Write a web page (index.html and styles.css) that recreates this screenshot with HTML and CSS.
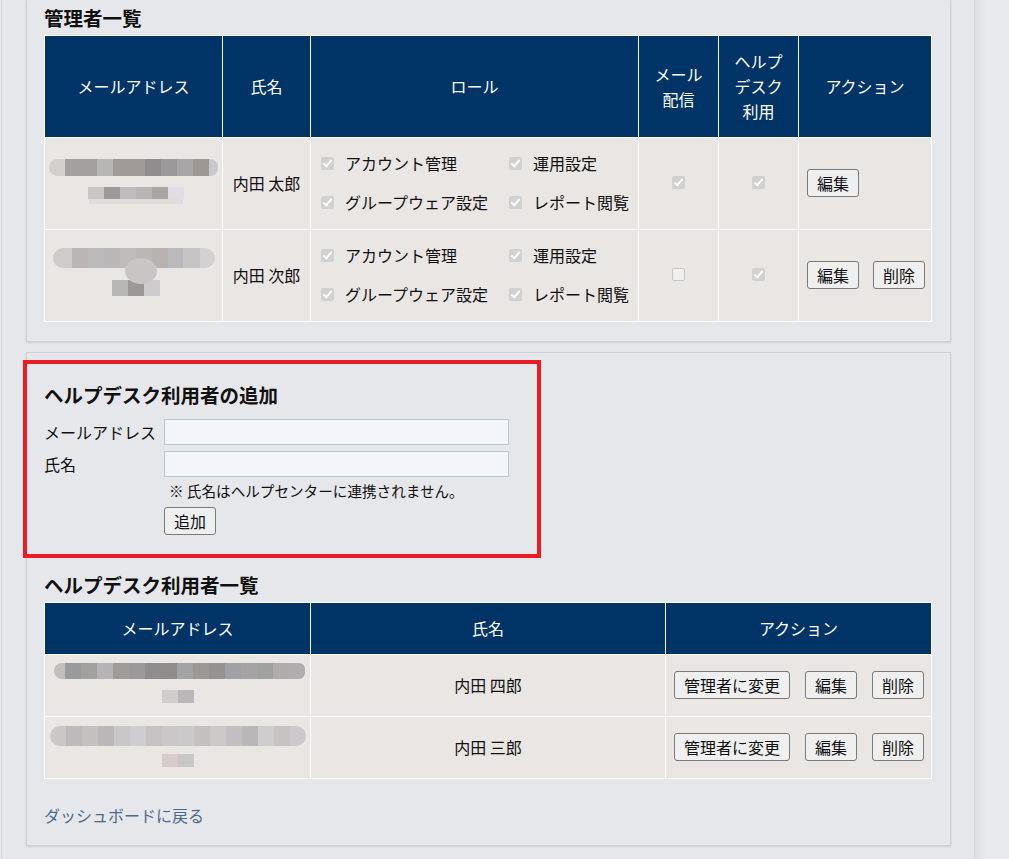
FILE: index.html
```html
<!DOCTYPE html>
<html lang="ja">
<head>
  <meta charset="UTF-8">
  <meta name="viewport" content="width=device-width, initial-scale=1.0">
  <title>ヘルプデスク利用者の管理</title>
  <link rel="stylesheet" href="styles.css">
</head>
<body>
  <div class="layout">
    <main class="main">
      <section class="card card-first">
        <h2 class="section-title">管理者一覧</h2>
        <table class="list admin-list">
          <colgroup>
            <col class="w-mail">
            <col class="w-name">
            <col class="w-role">
            <col class="w-flag">
            <col class="w-flag">
            <col class="w-action">
          </colgroup>
          <thead>
            <tr>
              <th>メールアドレス</th>
              <th>氏名</th>
              <th>ロール</th>
              <th>メール<br>配信</th>
              <th>ヘルプ<br>デスク<br>利用</th>
              <th>アクション</th>
            </tr>
          </thead>
          <tbody>
            <tr>
              <td class="mail">
                <div class="mask mask-a">
                  <span class="bar bar-a1"></span>
                  <span class="bar bar-a2"></span>
                </div>
              </td>
              <td class="name">内田 太郎</td>
              <td class="roles">
                <div class="role-grid">
                  <label class="role"><input type="checkbox" checked disabled>アカウント管理</label>
                  <label class="role"><input type="checkbox" checked disabled>運用設定</label>
                  <label class="role"><input type="checkbox" checked disabled>グループウェア設定</label>
                  <label class="role"><input type="checkbox" checked disabled>レポート閲覧</label>
                </div>
              </td>
              <td class="flag"><input type="checkbox" checked disabled></td>
              <td class="flag"><input type="checkbox" checked disabled></td>
              <td class="actions">
                <div class="btn-row">
                  <button class="btn">編集</button>
                </div>
              </td>
            </tr>
            <tr>
              <td class="mail">
                <div class="mask mask-b">
                  <span class="bar bar-b1"></span>
                  <span class="bar bar-b2"></span>
                  <span class="blob"></span>
                </div>
              </td>
              <td class="name">内田 次郎</td>
              <td class="roles">
                <div class="role-grid">
                  <label class="role"><input type="checkbox" checked disabled>アカウント管理</label>
                  <label class="role"><input type="checkbox" checked disabled>運用設定</label>
                  <label class="role"><input type="checkbox" checked disabled>グループウェア設定</label>
                  <label class="role"><input type="checkbox" checked disabled>レポート閲覧</label>
                </div>
              </td>
              <td class="flag"><input type="checkbox" disabled></td>
              <td class="flag"><input type="checkbox" checked disabled></td>
              <td class="actions">
                <div class="btn-row">
                  <button class="btn">編集</button>
                  <button class="btn">削除</button>
                </div>
              </td>
            </tr>
          </tbody>
        </table>
      </section>

      <section class="card">
        <div class="add-form">
          <h2 class="section-title form-title">ヘルプデスク利用者の追加</h2>
          <div class="form-grid">
            <label class="form-label" for="add-mail">メールアドレス</label>
            <input class="form-input" id="add-mail" type="text">
            <label class="form-label" for="add-name">氏名</label>
            <input class="form-input" id="add-name" type="text">
            <p class="note">※ 氏名はヘルプセンターに連携されません。</p>
            <div class="form-submit">
              <button class="btn">追加</button>
            </div>
          </div>
        </div>

        <h2 class="section-title list-title">ヘルプデスク利用者一覧</h2>
        <table class="list user-list">
          <colgroup>
            <col class="w-user-mail">
            <col class="w-user-name">
            <col class="w-user-action">
          </colgroup>
          <thead>
            <tr>
              <th>メールアドレス</th>
              <th>氏名</th>
              <th>アクション</th>
            </tr>
          </thead>
          <tbody>
            <tr>
              <td class="mail">
                <div class="mask mask-c">
                  <span class="bar bar-c1"></span>
                  <span class="bar bar-c2"></span>
                </div>
              </td>
              <td class="name">内田 四郎</td>
              <td class="actions">
                <div class="btn-row">
                  <button class="btn">管理者に変更</button>
                  <button class="btn">編集</button>
                  <button class="btn">削除</button>
                </div>
              </td>
            </tr>
            <tr>
              <td class="mail">
                <div class="mask mask-d">
                  <span class="bar bar-d1"></span>
                  <span class="bar bar-d2"></span>
                </div>
              </td>
              <td class="name">内田 三郎</td>
              <td class="actions">
                <div class="btn-row">
                  <button class="btn">管理者に変更</button>
                  <button class="btn">編集</button>
                  <button class="btn">削除</button>
                </div>
              </td>
            </tr>
          </tbody>
        </table>

        <a class="back-link" href="#">ダッシュボードに戻る</a>
      </section>

      <div class="highlight"></div>
    </main>
    <aside class="rail"></aside>
  </div>
</body>
</html>
```

FILE: styles.css
```css
* {
  margin: 0;
  padding: 0;
  box-sizing: border-box;
}

body {
  background-color: #e6e7eb;
  color: #111;
  font-family: 'Noto Sans CJK JP', 'Noto Sans', sans-serif;
  font-size: 16px;
  line-height: 24px;
}

.layout {
  display: flex;
  min-height: 100vh;
}

.main {
  position: relative;
  width: 974px;
  margin-left: 1px;
  padding: 0 23px 24px 24px;
  border-left: 1px solid #d6d7db;
  border-right: 1px solid #d2d3d7;
}

.rail {
  flex: 1;
  background: linear-gradient(90deg, #dedfe3, #e9eaee 12px);
}

.card {
  width: 925px;
  margin-top: 10px;
  padding: 28px 18px 18px 17px;
  border: 1px solid #cfd0d4;
  box-shadow: 0 1px 2px rgba(0, 0, 0, 0.1);
}

.card-first {
  margin-top: 0;
  padding-top: 4px;
  padding-bottom: 19px;
  border-top: none;
}

.section-title {
  font-size: 19.5px;
  line-height: 28px;
  font-weight: bold;
  margin-bottom: 3px;
}

.form-title {
  margin-bottom: 10px;
}

.list-title {
  margin-top: 36px;
}

/* tables */

.list {
  width: 888px;
  table-layout: fixed;
  border-collapse: collapse;
}

.list th,
.list td {
  border: 1px solid #fff;
}

.list th {
  background-color: #003366;
  color: #fff;
  font-weight: normal;
  line-height: 25px;
  padding: 13px 4px;
  text-align: center;
}

.list td {
  background-color: #e9e6e4;
  padding: 13px 8px 15px;
  text-align: center;
}

.w-mail { width: 178px; }
.w-name { width: 88px; }
.w-role { width: 328px; }
.w-flag { width: 80px; }
.w-action { width: 133px; }

.w-user-mail { width: 266px; }
.w-user-name { width: 355px; }
.w-user-action { width: 266px; }

.list td.mail {
  padding-left: 2px;
  padding-right: 2px;
}

.list td.roles {
  padding-left: 10px;
  padding-right: 4px;
  text-align: left;
}

.list td.actions {
  text-align: left;
}

.user-list td {
  padding-top: 16px;
  padding-bottom: 17px;
}

.user-list td.mail {
  padding-top: 8px;
  padding-bottom: 8px;
}

.role-grid {
  display: grid;
  grid-template-columns: 188px auto;
  grid-auto-rows: 24px;
  row-gap: 15px;
}

.role {
  display: flex;
  align-items: center;
  gap: 11px;
  white-space: nowrap;
}

input[type="checkbox"] {
  appearance: none;
  position: relative;
  flex-shrink: 0;
  width: 13px;
  height: 13px;
  margin: 0;
  border: 1px solid #c6c6c6;
  border-radius: 2px;
  background-color: #f0f0f0;
  vertical-align: middle;
}

input[type="checkbox"]:checked {
  border-color: #d1d1d1;
  background-color: #d1d1d1;
}

input[type="checkbox"]:checked::after {
  content: '';
  position: absolute;
  left: 3px;
  top: 0px;
  width: 3px;
  height: 7px;
  border: solid #fff;
  border-width: 0 2px 2px 0;
  transform: rotate(40deg);
}

.flag input[type="checkbox"] {
  display: block;
  margin: 0 auto;
}

.btn-row {
  display: flex;
  gap: 14px;
}

.user-list .btn-row {
  gap: 15px;
}

.btn {
  font-family: inherit;
  font-size: 16px;
  line-height: 24px;
  padding: 1px 9px;
  color: #111;
  background-color: #efefef;
  border: 1px solid #7a7a7a;
  border-radius: 3px;
  white-space: nowrap;
}

/* blurred addresses */

.mask {
  position: relative;
  display: flex;
  flex-direction: column;
  align-items: center;
  height: 63px;
  filter: blur(0.5px);
}

.mask-c,
.mask-d {
  height: 45px;
}

.bar {
  display: block;
  flex-shrink: 0;
}

.bar-a1 {
  width: 169px;
  height: 17px;
  margin-top: 8px;
  border-radius: 9px 8px 8px 9px;
  background: linear-gradient(90deg, #d4d0ce 0 16px, #a4a0a0 16px 48px, #b8b5b5 48px 64px, #a09b99 64px 96px, #8f8d8e 96px 112px, #9c999a 112px 128px, #a9a6a7 128px 144px, #9e9895 144px 160px, #c9cacf 160px);
}

.bar-a2 {
  width: 96px;
  height: 12px;
  margin-top: 11px;
  margin-left: 4px;
  background: linear-gradient(90deg, #c9c5c3 0 16px, #9b9999 16px 32px, #bdbbbb 32px 48px, #b6b4b4 48px 64px, #a9a5a3 64px 80px, #dfdfe3 80px);
  box-shadow: 0 6px 0 -1px #e0dcdb;
}

.bar-b1 {
  width: 162px;
  height: 20px;
  margin-top: 5px;
  border-radius: 10px;
  background: linear-gradient(90deg, #cfcbca 0 19px, #bbb5b5 19px 35px, #bdbabb 35px 51px, #bab7b9 51px 67px, #c1bcbc 67px 83px, #bcb7b6 83px 99px, #b8b2b0 99px 115px, #bab9bd 115px 130px, #c6c4c5 130px 147px, #d3d1d1 147px);
}

.bar-b2 {
  width: 48px;
  height: 16px;
  margin-top: 12px;
  margin-left: 4px;
  background: linear-gradient(90deg, #b9b7b6 0 16px, #9c9898 16px 32px, #cdcbcc 32px);
}

.blob {
  position: absolute;
  top: 15px;
  left: 78px;
  width: 32px;
  height: 26px;
  border-radius: 50%;
  background-color: #c9c5c5;
}

.bar-c1 {
  width: 251px;
  height: 16px;
  margin-left: 3px;
  border-radius: 8px 6px 6px 8px;
  background: linear-gradient(90deg, #c2bebe 0 11px, #9a9a9c 11px 27px, #a3a0a0 27px 43px, #b5b3b5 43px 59px, #a09c9a 59px 75px, #9b9999 75px 91px, #8f8d8d 91px 107px, #8f8c8b 107px 123px, #a3a3a5 123px 139px, #9c9896 139px 155px, #959190 155px 171px, #a1a1a5 171px 187px, #a5a3a3 187px 203px, #a1a19f 203px 219px, #b1abab 219px 235px, #afadad 235px);
}

.bar-c2 {
  width: 32px;
  height: 13px;
  margin-top: 11px;
  background: linear-gradient(90deg, #d1cdcd 0 16px, #b9b7b9 16px);
}

.bar-d1 {
  width: 256px;
  height: 20px;
  margin-top: 1px;
  border-radius: 10px;
  background: linear-gradient(90deg, #cbc7c7 0 16px, #bcbaba 16px 32px, #c4c0c0 32px 48px, #b9b7b7 48px 64px, #c9c7c7 64px 80px, #cfcdcf 80px 96px, #c6c2c4 96px 112px, #c9c7c7 112px 128px, #cbc9c9 128px 144px, #c4c0c0 144px 160px, #cdc9c9 160px 176px, #c1bfc1 176px 192px, #b9b7b7 192px 208px, #cfcdcd 208px 224px, #c7c3c3 224px 240px, #cbc9cb 240px);
}

.bar-d2 {
  width: 32px;
  height: 13px;
  margin-top: 8px;
  background: linear-gradient(90deg, #d6cccc 0 16px, #c8c8c8 16px);
}

/* add form */

.form-grid {
  display: grid;
  grid-template-columns: 120px 345px;
  row-gap: 6px;
  align-items: center;
}

.form-input {
  width: 345px;
  height: 26px;
  padding: 0 4px;
  font-family: inherit;
  font-size: 16px;
  background-color: #f3f5fa;
  border: 1px solid #b9c5d8;
}

.form-input:focus {
  outline: none;
}

.note {
  grid-column: 2;
  margin-top: -2px;
  padding-left: 5px;
  font-size: 14.6px;
  line-height: 20px;
  white-space: nowrap;
}

.form-submit {
  grid-column: 2;
}

.back-link {
  display: block;
  width: fit-content;
  margin-top: 24px;
  color: #4b6a8a;
  text-decoration: none;
}

.highlight {
  position: absolute;
  top: 360px;
  left: 21px;
  width: 518px;
  height: 198px;
  border: 4px solid #ec1c24;
  pointer-events: none;
}
```
